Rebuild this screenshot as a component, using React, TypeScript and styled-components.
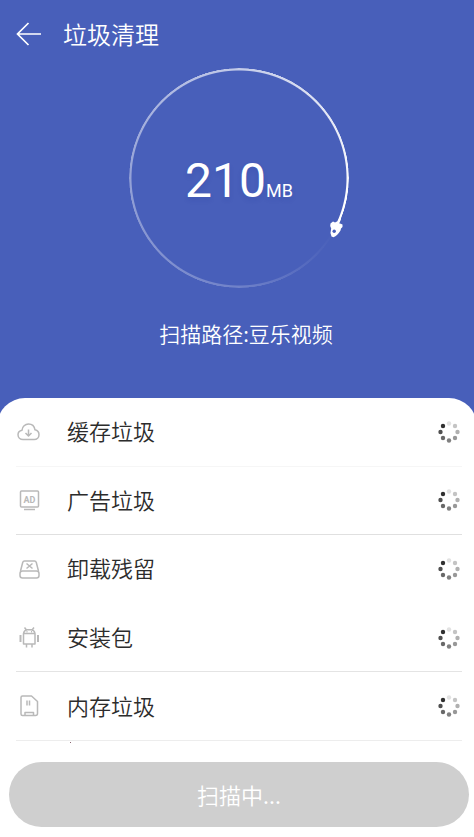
import React from "react";
import styled, { createGlobalStyle } from "styled-components";

const GlobalStyle = createGlobalStyle`
  * { box-sizing: border-box; }
  body {
    margin: 0;
    background: #485fba;
    font-family: Roboto, "Noto Sans CJK SC", sans-serif;
  }
`;

const Page = styled.main`
  display: flex;
  flex-direction: column;
  min-height: 100vh;
  overflow: hidden;
  background: #485fba;
  color: #fff;
`;

const Header = styled.header`
  display: flex;
  align-items: center;
  gap: 21px;
  height: 68px;
  padding: 0 16px;
`;

const BackButton = styled.button`
  display: flex;
  padding: 0;
  border: 0;
  background: none;
  color: #fff;
  cursor: pointer;
`;

const Title = styled.h1`
  margin: 0;
  font-family: "Noto Sans CJK SC", sans-serif;
  font-size: 24px;
  line-height: 36px;
  font-weight: 350;
`;

const Gauge = styled.section`
  position: relative;
  display: flex;
  align-items: center;
  justify-content: center;
  align-self: center;
  width: 220px;
  height: 220px;
  margin-right: 4px;
  margin-left: 8px;
`;

const Ring = styled.div`
  position: absolute;
  inset: 0;
  border-radius: 50%;
  background: conic-gradient(
    from 117deg,
    rgba(255, 255, 255, 0) 0deg,
    rgba(255, 255, 255, 0.04) 15deg,
    rgba(255, 255, 255, 0.22) 63deg,
    rgba(255, 255, 255, 0.42) 153deg,
    rgba(255, 255, 255, 0.68) 243deg,
    #fff 345deg,
    #fff 360deg
  );
  mask: radial-gradient(closest-side, transparent 107px, #000 108px, #000 110px, transparent 110px);
`;

const Rocket = styled.svg`
  position: absolute;
  right: 5px;
  bottom: 49px;
`;

const Amount = styled.p`
  display: flex;
  align-items: baseline;
  margin: 0;
  padding-top: 16px;
  font-size: 48px;
  line-height: 56px;
  text-shadow: 0 3px 5px rgba(20, 40, 140, 0.14);
`;

const Unit = styled.span`
  font-size: 18px;
`;

const ScanPath = styled.p`
  margin: 31px 0 50px;
  padding-left: 18px;
  font-family: "Noto Sans CJK SC", sans-serif;
  font-size: 21px;
  font-weight: 350;
  line-height: 29px;
  text-align: center;
`;

const Panel = styled.section`
  display: flex;
  flex: 1;
  flex-direction: column;
  border-radius: 28px 28px 0 0;
  margin: 0 -3px;
  padding: 0 3px;
  background: #fff;
  color: #2c2c2c;
`;

const List = styled.ul`
  display: grid;
  flex: 1;
  grid-auto-rows: minmax(68px, 1fr);
  margin: 0;
  padding: 0 12px 0 16px;
  list-style: none;
`;

const Row = styled.li<{ $line: string }>`
  display: flex;
  align-items: center;
  border-bottom: 1px solid ${(p) => p.$line};
  padding: 0 1px;
`;

const IconBox = styled.span`
  display: flex;
  width: 50px;
  color: #b9b9b9;
`;

const Label = styled.span`
  flex: 1;
  padding-bottom: 3px;
  font-family: "Noto Sans CJK SC", sans-serif;
  font-size: 22px;
  font-weight: 350;
  line-height: 32px;
`;

const Footer = styled.footer`
  position: relative;
  padding: 21px 5px 10px 9px;

  &::before {
    content: "";
    position: absolute;
    top: 1px;
    left: 70px;
    width: 1px;
    height: 1px;
    background: #8b6570;
  }
`;

const ScanButton = styled.button`
  display: block;
  width: 100%;
  height: 65px;
  border: 0;
  border-radius: 33px;
  padding: 0 0 2px;
  background: #cfcfcf;
  color: #fff;
  font-family: "Noto Sans CJK SC", sans-serif;
  font-size: 22px;
  font-weight: 350;
  line-height: 32px;
`;

const glyphs = {
  cloud: (
    <g transform="translate(0 1)">
      <path d="M6 18.5C3.2 18.5 1 16.500 1 13.800C1 11.400 2.600 9.700 5 9.200C5.200 5.600 8.200 3 11.500 3C14.800 3 17.400 5.300 18 8.800C20.500 9.400 22 11.200 22 13.700C22 16.500 19.900 18.500 17.200 18.500Z" />
      <path d="M11.500 8.500V15M8.500 12L11.500 15L14.500 12" />
    </g>
  ),
  ad: (
    <>
      <rect x="3.500" y="3" width="18" height="16" rx="1" />
      <path d="M7 21.500H18" />
      <text x="12.500" y="14.500" textAnchor="middle" fontFamily="Roboto, sans-serif" fontSize="9" fontWeight="700" fill="currentColor" stroke="none">
        AD
      </text>
    </>
  ),
  disk: (
    <g transform="translate(0 1)">
      <path d="M3.500 13L5.700 4.500Q6.100 3 7.500 3H17.500Q18.900 3 19.300 4.500L21.500 13" />
      <rect x="3" y="13" width="19" height="7" rx="2.500" />
      <path d="M9.500 5.500L15.500 10.500M15.500 5.500L9.500 10.500" />
    </g>
  ),
  android: (
    <>
      <path d="M6.500 7.500H18V18H6.500ZM6.500 7.500Q7 4.300 10 3.800H14.500Q17.500 4.300 18 7.500M7.500 1.500L9.500 4M17 1.500L15 4M9.500 18V21.500M15 18V21.500" />
      <path d="M3.500 9V16M21 9V16" strokeWidth="2" />
      <path d="M9.500 5.800H10.500M14 5.800H15" />
    </>
  ),
  card: (
    <>
      <path d="M5.500 2H14.500L20.500 7.500V19.500Q20.500 21.500 18.500 21.500H5.500Q4 21.500 4 20V3.500Q4 2 5.500 2Z" />
      <path d="M8 21V18.500H16.500V21" />
      <path d="M10 6.500V11.500M12.500 6.500V11.500" />
    </>
  ),
};

type Glyph = keyof typeof glyphs;

const items: { label: string; icon: Glyph; line: string }[] = [
  { label: "缓存垃圾", icon: "cloud", line: "#f6f6f6" },
  { label: "广告垃圾", icon: "ad", line: "#e0e0e0" },
  { label: "卸载残留", icon: "disk", line: "transparent" },
  { label: "安装包", icon: "android", line: "#e4e4e4" },
  { label: "内存垃圾", icon: "card", line: "#ededed" },
];

const dots = ["#e2e2e2", "#c4c4c4", "#b0b0b0", "#989898", "#808080", "#686868", "#505050", "#303030"];

function Spinner() {
  return (
    <svg width="24" height="24" viewBox="0 0 24 24" role="img" aria-label="扫描中">
      {dots.map((fill, i) => {
        const a = (i * Math.PI) / 4;
        return <circle key={fill} cx={12 + 8.5 * Math.sin(a)} cy={12 - 8.5 * Math.cos(a)} r="2.200" fill={fill} />;
      })}
    </svg>
  );
}

export default function App() {
  return (
    <Page>
      <GlobalStyle />
      <Header>
        <BackButton aria-label="返回">
          <svg width="26" height="26" viewBox="0 0 26 26" fill="none" stroke="currentColor" strokeWidth="1.700">
            <path d="M12.500 2L1.500 13L12.500 24M1.500 13H25" />
          </svg>
        </BackButton>
        <Title>垃圾清理</Title>
      </Header>
      <Gauge>
        <Ring />
        <Rocket width="16" height="20" viewBox="0 0 16 20" aria-hidden="true">
          <path
            d="M2.500 4.500L5 2.500L7 3.500L9 2.500L10.500 4L12 4.500L14.500 5.500L14.500 8L13 9.500L12.500 11.500Q9.500 16.500 5.500 18.200L3.500 17.500Q1.800 13.500 3.200 9.500L2.200 7Z"
            fill="#fff"
          />
          <path d="M10 4L12 0" stroke="#fff" strokeWidth="2.200" />
          <circle cx="6.200" cy="12.300" r="1.700" fill="#485fba" />
        </Rocket>
        <Amount>
          210<Unit>MB</Unit>
        </Amount>
      </Gauge>
      <ScanPath>扫描路径:豆乐视频</ScanPath>
      <Panel>
        <List>
          {items.map((item) => (
            <Row key={item.label} $line={item.line}>
              <IconBox>
                <svg width="24" height="24" viewBox="0 0 24 24" fill="none" stroke="currentColor" strokeWidth="1.500" strokeLinejoin="round" aria-hidden="true">
                  {glyphs[item.icon]}
                </svg>
              </IconBox>
              <Label>{item.label}</Label>
              <Spinner />
            </Row>
          ))}
        </List>
        <Footer>
          <ScanButton>扫描中...</ScanButton>
        </Footer>
      </Panel>
    </Page>
  );
}
